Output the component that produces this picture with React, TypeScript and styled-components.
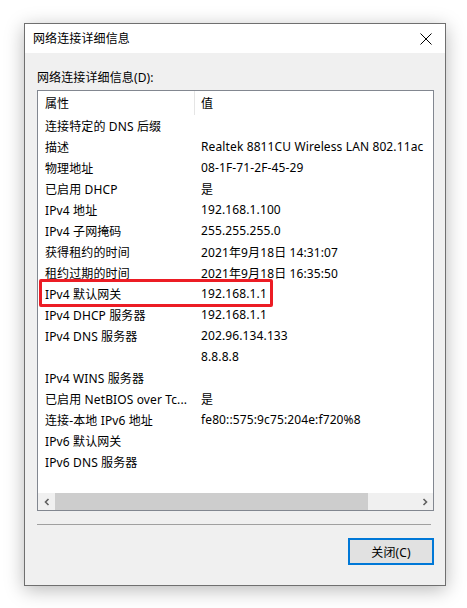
import styled, { createGlobalStyle } from "styled-components";

const GlobalStyle = createGlobalStyle`
  html, body {
    margin: 0;
    padding: 0;
    background: #ffffff;
  }
  body {
    font-family: "Noto Sans", "Noto Sans CJK SC", sans-serif;
    font-size: 12px;
    letter-spacing: 0.12px;
    color: #000;
  }
`;

const Page = styled.div`
  padding: 23px 0 0 24px;
  width: 467px;
  height: 608px;
  box-sizing: border-box;
`;

const Dialog = styled.div`
  width: 422px;
  height: 563px;
  box-sizing: border-box;
  border: 1px solid #6f6f6f;
  background: #f0f0f0;
  box-shadow: 0 4px 18px rgba(0, 0, 0, 0.28);
  display: flex;
  flex-direction: column;
`;

const TitleBar = styled.div`
  height: 29px;
  background: #ffffff;
  display: flex;
  align-items: center;
  justify-content: space-between;
  padding: 0 8px 0 8px;
`;

const Title = styled.span`
  font-size: 12px;
  line-height: 16px;
`;

const CloseButton = styled.button`
  width: 24px;
  height: 24px;
  border: none;
  background: transparent;
  display: flex;
  align-items: center;
  justify-content: center;
  padding: 0;
  margin-right: -1px;
`;

const Content = styled.div`
  flex: 1;
  display: flex;
  flex-direction: column;
  padding: 17px 11px 0 12px;
`;

const Label = styled.div`
  line-height: 16px;
  height: 16px;
  margin-bottom: 4px;
`;

const ListBox = styled.div`
  position: relative;
  height: 421px;
  box-sizing: border-box;
  border: 1px solid #828790;
  background: #ffffff;
  display: flex;
  flex-direction: column;
  overflow: hidden;
`;

const Rows = styled.div`
  flex: 1;
`;

const HeaderRow = styled.div`
  display: grid;
  grid-template-columns: 156px 1px 1fr;
  height: 24px;
  align-items: center;
`;

const HeaderCell = styled.div<{ $value?: boolean }>`
  padding-left: ${({ $value }) => ($value ? "6px" : "7px")};
`;

const Divider = styled.div`
  height: 24px;
  background: #e5e5e5;
`;

const Row = styled.div`
  display: grid;
  grid-template-columns: 157px 1fr;
  height: 21px;
  align-items: center;
  white-space: nowrap;
`;

const Cell = styled.div<{ $value?: boolean }>`
  padding-left: ${({ $value }) => ($value ? "6px" : "7px")};
  overflow: hidden;
`;

const ScrollBar = styled.div`
  height: 17px;
  background: #f0f0f0;
  display: flex;
  align-items: center;
`;

const ArrowBox = styled.div`
  width: 17px;
  height: 17px;
  display: flex;
  align-items: center;
  justify-content: center;
`;

const Track = styled.div`
  flex: 1;
  height: 17px;
  display: flex;
`;

const Thumb = styled.div`
  width: 313px;
  height: 17px;
  background: #cdcdcd;
`;

const Highlight = styled.div`
  position: absolute;
  left: 1px;
  top: 188px;
  width: 234px;
  height: 28px;
  box-sizing: border-box;
  border: 3px solid #ec1c24;
  border-radius: 2px;
  pointer-events: none;
`;

const Separator = styled.div`
  height: 1px;
  background: #a0a0a0;
  margin: 13px 3px 0 0;
`;

const Footer = styled.div`
  display: flex;
  justify-content: flex-end;
  padding-top: 13px;
`;

const Button = styled.button`
  width: 86px;
  height: 27px;
  box-sizing: border-box;
  border: 2px solid #0078d7;
  background: #e1e1e1;
  font-family: "Noto Sans", "Noto Sans CJK SC", sans-serif;
  font-size: 12px;
  letter-spacing: 0.12px;
  color: #000;
  padding: 0;
`;

const rows: [string, string][] = [
  ["连接特定的 DNS 后缀", ""],
  ["描述", "Realtek 8811CU Wireless LAN 802.11ac"],
  ["物理地址", "08-1F-71-2F-45-29"],
  ["已启用 DHCP", "是"],
  ["IPv4 地址", "192.168.1.100"],
  ["IPv4 子网掩码", "255.255.255.0"],
  ["获得租约的时间", "2021年9月18日 14:31:07"],
  ["租约过期的时间", "2021年9月18日 16:35:50"],
  ["IPv4 默认网关", "192.168.1.1"],
  ["IPv4 DHCP 服务器", "192.168.1.1"],
  ["IPv4 DNS 服务器", "202.96.134.133"],
  ["", "8.8.8.8"],
  ["IPv4 WINS 服务器", ""],
  ["已启用 NetBIOS over Tc...", "是"],
  ["连接-本地 IPv6 地址", "fe80::575:9c75:204e:f720%8"],
  ["IPv6 默认网关", ""],
  ["IPv6 DNS 服务器", ""],
];

const Chevron = ({ dir }: { dir: "left" | "right" }) => (
  <svg width="8" height="8" viewBox="0 0 8 8">
    <path
      d={dir === "left" ? "M5.5 1 L2.5 4 L5.5 7" : "M2.5 1 L5.5 4 L2.5 7"}
      fill="none"
      stroke="#606060"
      strokeWidth="1.6"
    />
  </svg>
);

export default function App() {
  return (
    <Page>
      <GlobalStyle />
      <Dialog>
        <TitleBar>
          <Title>网络连接详细信息</Title>
          <CloseButton>
            <svg width="12" height="12" viewBox="0 0 12 12">
              <path d="M0.5 0.5 L11.5 11.5 M11.5 0.5 L0.5 11.5" stroke="#000" strokeWidth="1" />
            </svg>
          </CloseButton>
        </TitleBar>
        <Content>
          <Label>网络连接详细信息(D):</Label>
          <ListBox>
            <Rows>
              <HeaderRow>
                <HeaderCell>属性</HeaderCell>
                <Divider />
                <HeaderCell $value>值</HeaderCell>
              </HeaderRow>
              {rows.map(([k, v], i) => (
                <Row key={i}>
                  <Cell>{k}</Cell>
                  <Cell $value>{v}</Cell>
                </Row>
              ))}
            </Rows>
            <ScrollBar>
              <ArrowBox>
                <Chevron dir="left" />
              </ArrowBox>
              <Track>
                <Thumb />
              </Track>
              <ArrowBox>
                <Chevron dir="right" />
              </ArrowBox>
            </ScrollBar>
            <Highlight />
          </ListBox>
          <Separator />
          <Footer>
            <Button>关闭(C)</Button>
          </Footer>
        </Content>
      </Dialog>
    </Page>
  );
}
